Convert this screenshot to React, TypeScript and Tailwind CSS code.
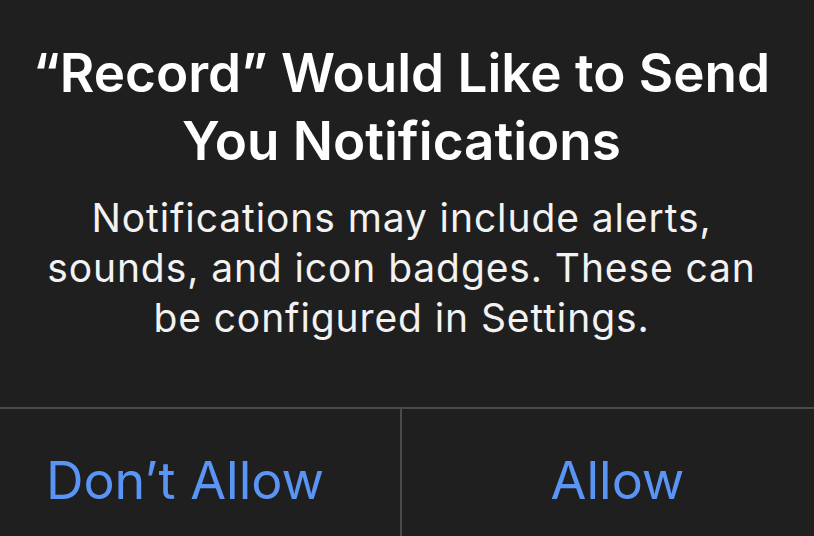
export default function App() {
  return (
    <div className="w-[814px] h-[536px] overflow-hidden bg-[#1f1f1f]" style={{ fontFamily: 'Inter, "Noto Sans", sans-serif' }}>
      <div className="ml-[-30px] w-[863px] flex flex-col">
        <div className="pt-[39px] h-[407px] flex flex-col items-center text-center">
          <div className="text-[53px] leading-[68px] font-semibold text-white">
            <div>“Record” Would Like to Send</div>
            <div>You Notifications</div>
          </div>
          <div className="mt-[18px] text-[39px] leading-[50px] tracking-[0.9px] text-[#f2f2f2] whitespace-nowrap">
            <div>Notifications may include alerts,</div>
            <div>sounds, and icon badges. These can</div>
            <div>be configured in Settings.</div>
          </div>
        </div>
        <div className="flex border-t-2 border-[#4a4a4a] h-[140px]">
          <div className="w-[432px] flex justify-center pt-[40px] text-[52px] leading-[64px] text-[#5a95f5] border-r-2 border-[#4a4a4a]">
            Don’t Allow
          </div>
          <div className="flex-1 flex justify-center pt-[40px] text-[52px] leading-[64px] text-[#5a95f5]">
            Allow
          </div>
        </div>
      </div>
    </div>
  );
}
